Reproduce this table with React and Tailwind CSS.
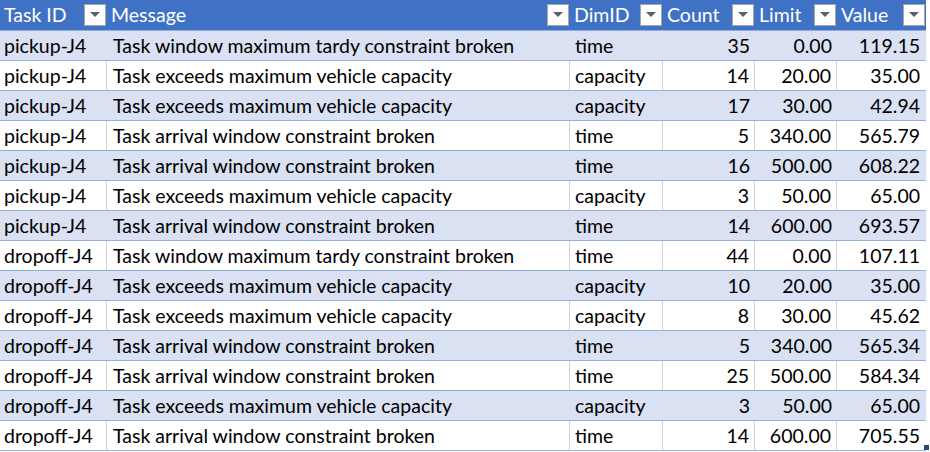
const rows = [
  ["pickup-J4", "Task window maximum tardy constraint broken", "time", "35", "0.00", "119.15"],
  ["pickup-J4", "Task exceeds maximum vehicle capacity", "capacity", "14", "20.00", "35.00"],
  ["pickup-J4", "Task exceeds maximum vehicle capacity", "capacity", "17", "30.00", "42.94"],
  ["pickup-J4", "Task arrival window constraint broken", "time", "5", "340.00", "565.79"],
  ["pickup-J4", "Task arrival window constraint broken", "time", "16", "500.00", "608.22"],
  ["pickup-J4", "Task exceeds maximum vehicle capacity", "capacity", "3", "50.00", "65.00"],
  ["pickup-J4", "Task arrival window constraint broken", "time", "14", "600.00", "693.57"],
  ["dropoff-J4", "Task window maximum tardy constraint broken", "time", "44", "0.00", "107.11"],
  ["dropoff-J4", "Task exceeds maximum vehicle capacity", "capacity", "10", "20.00", "35.00"],
  ["dropoff-J4", "Task exceeds maximum vehicle capacity", "capacity", "8", "30.00", "45.62"],
  ["dropoff-J4", "Task arrival window constraint broken", "time", "5", "340.00", "565.34"],
  ["dropoff-J4", "Task arrival window constraint broken", "time", "25", "500.00", "584.34"],
  ["dropoff-J4", "Task exceeds maximum vehicle capacity", "capacity", "3", "50.00", "65.00"],
  ["dropoff-J4", "Task arrival window constraint broken", "time", "14", "600.00", "705.55"],
];

const cols = [
  { name: "Task ID", w: "w-[107px]", right: false, pad: "pl-[4px]" },
  { name: "Message", w: "w-[463px]", right: false, pad: "pl-[6px]" },
  { name: "DimID", w: "w-[93px]", right: false, pad: "pl-[5px]" },
  { name: "Count", w: "w-[92px]", right: true, pad: "pr-[5px]" },
  { name: "Limit", w: "w-[82px]", right: true, pad: "pr-[5px]" },
  { name: "Value", w: "w-[89px]", right: true, pad: "pr-[6px]" },
];

const FilterButton = () => (
  <div className="w-[22px] h-[22px] bg-white border border-[#a6a6a6] flex items-center justify-center shrink-0">
    <svg width="10" height="6" viewBox="0 0 10 6">
      <polygon points="0,0 10,0 5,5" fill="#5f5f5f" />
    </svg>
  </div>
);

export default function App() {
  return (
    <div
      className="w-[930px] h-[452px] bg-white overflow-hidden text-[19.5px] text-black leading-none"
      style={{ fontFamily: "Lato, 'Liberation Sans', sans-serif" }}
    >
      <div className="flex h-[30px] bg-[#3f72c4] w-[926px]">
        {cols.map((c) => (
          <div key={c.name} className={`${c.w} flex items-center justify-between pl-[4px] pr-[1px]`}>
            <span className="text-white">{c.name}</span>
            <FilterButton />
          </div>
        ))}
      </div>
      {rows.map((r, i) => {
        const band = i % 2 === 0;
        return (
          <div
            key={i}
            className={`flex h-[30px] w-[926px] border-t border-[#93aedc] ${band ? "bg-[#d9e1f2]" : "bg-white"}`}
          >
            {r.map((v, j) => (
              <div
                key={j}
                className={`${cols[j].w} ${cols[j].pad} flex items-center ${cols[j].right ? "justify-end" : ""} ${
                  !band && j < 5 ? "border-r border-[#d4d4d4]" : ""
                }`}
              >
                {v}
              </div>
            ))}
          </div>
        );
      })}
      <div className="relative flex h-[2px] w-[926px] border-t border-[#93aedc]">
        <div className="absolute right-[-3px] top-[-6px] w-[5px] h-[5px] bg-[#1f4e79]" />
      </div>
    </div>
  );
}
